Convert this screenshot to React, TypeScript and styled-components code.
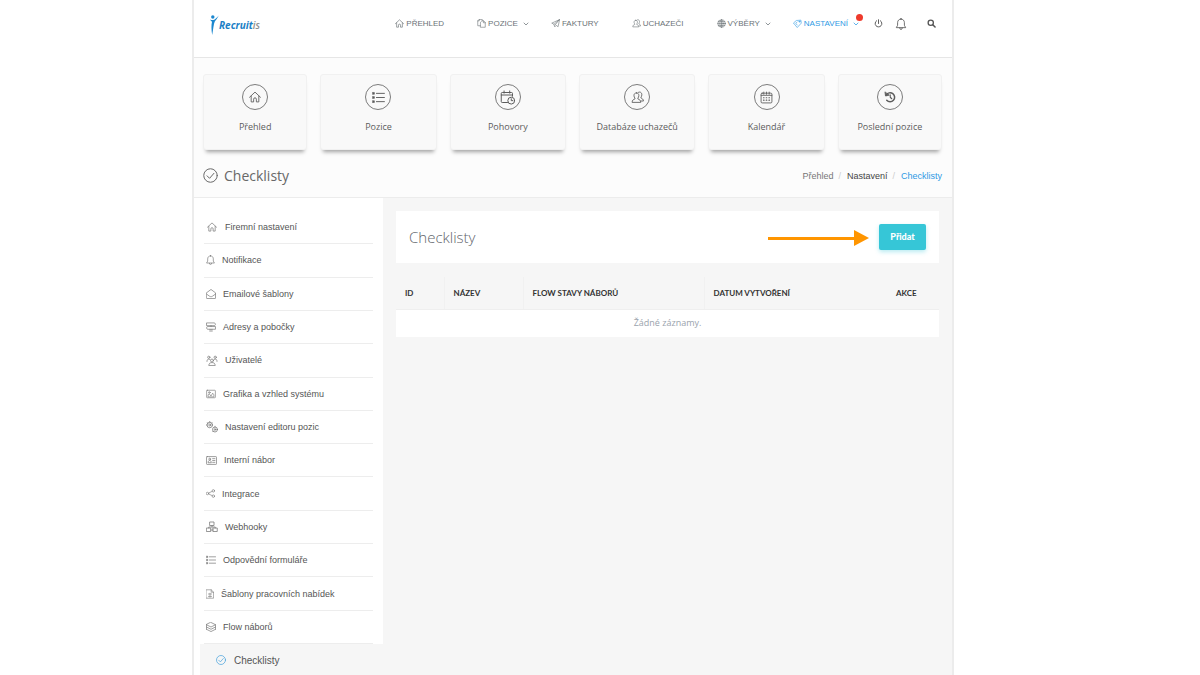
import React from "react";
import styled, { createGlobalStyle, css } from "styled-components";

const sans = `"Liberation Sans", Arial, sans-serif`;
const open = `"Open Sans", "Noto Sans", sans-serif`;
const lato = `Lato, "Open Sans", sans-serif`;

const GlobalStyle = createGlobalStyle`
  *, *::before, *::after { box-sizing: border-box; }
  body { margin: 0; background: #fff; font-family: ${sans}; color: #555; }
  h1, h2, ul, ol { margin: 0; padding: 0; font-weight: 400; }
  li { list-style: none; }
  a { color: inherit; text-decoration: none; }
  button { font: inherit; color: inherit; border: 0; padding: 0; background: none; cursor: pointer; }
`;

/* ---------- icons ---------- */

const Svg = styled.svg<{ $w: number; $h?: number }>`
  display: block;
  flex: none;
  width: ${(p) => p.$w}px;
  height: ${(p) => p.$h ?? p.$w}px;
  fill: none;
  stroke: currentColor;
  stroke-width: 1.6;
  stroke-linecap: round;
  stroke-linejoin: round;
`;

const shapes = {
  home: (
    <>
      <path d="M2 12.5 12 3l10 9.5" />
      <path d="M5 10.5V21h4.5v-5a2.5 2.5 0 0 1 5 0v5H19V10.5" />
    </>
  ),
  copy: (
    <>
      <path d="M9 18H2V5l4-4h8v3" />
      <path d="M10 8l3-3h5l4 4v13H10z" />
      <path d="M17 5v5h5M6 1v4H2" />
    </>
  ),
  plane: (
    <>
      <path d="M22 2 2 11l6 3 2 7 4-4 4 3z" />
      <path d="M22 2 8 14M22 2 11 16" />
    </>
  ),
  people: (
    <>
      <path d="M10 3.500c3 0 4.500 2 4.500 5 0 2-.8 3.500-1.800 4.700v1.500c3 1 5 2 5.300 6.300H2c.3-4.300 2.300-5.300 5.300-6.300v-1.500C6.300 12 5.500 10.500 5.500 8.500c0-3 1.500-5 4.500-5z" />
      <path d="M13 3c.8-.7 1.700-1 2.700-1 3 0 4.300 2.200 4.300 5 0 2-.8 3.500-1.600 4.500v1.500c2.300.9 4.300 2 4.600 5.500h-4" />
    </>
  ),
  globe: (
    <>
      <circle cx="12" cy="12" r="10" />
      <ellipse cx="12" cy="12" rx="4.500" ry="10" />
      <path d="M2 12h20M12 2v20M3.500 7h17M3.500 17h17" />
    </>
  ),
  tag: (
    <>
      <path d="M2 10 9 4l12-1 1 8-10 11z" />
      <path d="m7 11 4 5M11 8l-2 2" />
      <circle cx="17" cy="7" r="1.500" />
    </>
  ),
  chevron: <path d="m4 8 8 8 8-8" strokeWidth="3" />,
  power: (
    <>
      <path d="M12 2v10" strokeWidth="2.500" />
      <path d="M7 4.500a9 9 0 1 0 10 0" strokeWidth="2.500" />
    </>
  ),
  bell: (
    <>
      <path d="M12 2c-4 0-6.500 3-6.500 7v5L3 18.500h18L18.500 14V9c0-4-2.500-7-6.500-7z" />
      <path d="M9.500 19a2.500 3 0 0 0 5 0M12 1v1" />
    </>
  ),
  search: (
    <>
      <circle cx="10" cy="10" r="7" strokeWidth="3.500" />
      <path d="m15.500 15.500 6 6" strokeWidth="4" />
    </>
  ),
  list: (
    <>
      <path d="M8.500 5H22M8.500 12H22M8.500 19H22" />
      <g fill="currentColor" strokeWidth="1">
        <rect x="2" y="3.500" width="3" height="3" />
        <rect x="2" y="10.500" width="3" height="3" />
        <rect x="2" y="17.500" width="3" height="3" />
      </g>
    </>
  ),
  calendarClock: (
    <>
      <path d="M12 20H3.500C2.500 20 2 19.500 2 18.500v-13C2 4.500 2.500 4 3.500 4h15c1 0 1.500.5 1.500 1.500V10M2 8h18M6.500 1.500V5M15.500 1.500V5" />
      <circle cx="18" cy="17" r="5.500" />
      <path d="M18 14v3h2.500" />
    </>
  ),
  calendar: (
    <>
      <rect x="2" y="4" width="20" height="18" rx="2" />
      <path d="M2 8h20M7 2v4M12 2v4M17 2v4" />
      <path d="M6.500 12.500h1M11.500 12.500h1M16.500 12.500h1M6.500 17h1M11.500 17h1M16.500 17h1" strokeWidth="2.200" />
    </>
  ),
  history: (
    <>
      <path d="M4.500 8a9 9 0 1 1 1 10.500" strokeWidth="3" />
      <path d="M2 2.500 3 10l7-1.500z" fill="currentColor" />
      <path d="M12.500 7.500v5l3 3" strokeWidth="2.200" />
    </>
  ),
  check: (
    <>
      <circle cx="12" cy="12" r="10.800" />
      <path d="m6.500 12.500 4 4 7-8" />
    </>
  ),
  mail: (
    <>
      <path d="M2 9.500 12 2l10 7.500V21a1 1 0 0 1-1 1H3a1 1 0 0 1-1-1z" />
      <path d="m2 12 7 5c2 1.300 4 1.300 6 0l7-5" />
    </>
  ),
  sign: (
    <>
      <path d="M3 3h17l2 3-2 3H3zM21 11H4l-2 3 2 3h17z" />
      <path d="M12 9v2M10 17v5M14 17v5" />
    </>
  ),
  users: (
    <>
      <circle cx="12" cy="12" r="3.200" />
      <path d="M5 22c.5-4 3-5.500 7-5.500s6.500 1.500 7 5.500z" />
      <circle cx="5" cy="5" r="2.500" />
      <circle cx="19" cy="5" r="2.500" />
      <path d="M1 14c0-3.500 1.500-5 4-5 1.500 0 2.500.5 3 1.500M23 14c0-3.500-1.500-5-4-5-1.500 0-2.500.5-3 1.500" />
    </>
  ),
  image: (
    <>
      <rect x="1.500" y="3" width="21" height="18" rx="1.500" />
      <circle cx="8" cy="8.500" r="2" />
      <path d="M5 18v-4l3-2 4 5 4-7 3 4v4z" />
    </>
  ),
  gears: (
    <>
      <circle cx="7.500" cy="8" r="5.500" />
      <circle cx="7.500" cy="8" r="2" />
      <circle cx="18" cy="17" r="5" />
      <circle cx="18" cy="17" r="1.700" />
      <path d="M7.500 1v1.500M1 8h1M12 3.500l-1 1M3 3.500l1 1M18 10.500V12M23.500 17H23M13.500 21.500l1-1" />
    </>
  ),
  idcard: (
    <>
      <rect x="1" y="3.500" width="22" height="17" rx="1.500" />
      <circle cx="8" cy="9" r="2" />
      <path d="M4.500 16c.3-3 1.500-4 3.500-4s3.200 1 3.500 4zM14.500 8h5M14.500 12h5M14.500 16h5" />
    </>
  ),
  share: (
    <>
      <circle cx="4.500" cy="12" r="3" />
      <circle cx="19" cy="5.500" r="3" />
      <circle cx="19" cy="18.500" r="3" />
      <path d="m7.500 10.800 8.500-4M7.500 13.200l8.500 4" />
    </>
  ),
  blocks: (
    <>
      <rect x="8" y="2" width="8" height="7" />
      <rect x="1.500" y="14" width="8" height="7" />
      <rect x="14.500" y="14" width="8" height="7" />
      <path d="M12 9v3M5.500 14v-2h13v2M9.500 18h5" />
    </>
  ),
  doc: (
    <>
      <path d="M3 1.500h12l6 6v15H3zM15 1.500v6h6" />
      <path d="M8 12h8M8 18h8M12 10v10" />
    </>
  ),
  layers: (
    <>
      <path d="m12 2 10 5-10 5L2 7z" />
      <path d="m2 12 10 5 10-5M2 17l10 5 10-5M2 7v10M22 7v10" />
    </>
  ),
};

type IconName = keyof typeof shapes;

/* Icons whose drawing does not fill the default square */
const views: Partial<Record<IconName, string>> = {
  home: "1 1 22 22",
  bell: "2 0 20 23",
  doc: "2 0 20 24",
  share: "1 1 22 22",
  list: "1 1 22 22",
  layers: "1 1 22 22",
  mail: "1 1 22 22",
  sign: "1 1 22 22",
};

const Icon = ({ name, w, h }: { name: IconName; w: number; h?: number }) => (
  <Svg viewBox={views[name] ?? "0 0 24 24"} $w={w} $h={h} aria-hidden="true">
    {shapes[name]}
  </Svg>
);

/* ---------- page frame ---------- */

const Page = styled.div`
  display: flex;
  min-height: 100vh;
  padding: 0 246px 0 192px;
`;

const Shell = styled.div`
  flex: 1;
  min-width: 0;
  display: flex;
  flex-direction: column;
  border: solid #ececec;
  border-width: 0 2px;
  background: #fcfcfc;
`;

const Header = styled.header`
  display: flex;
  align-items: center;
  justify-content: space-between;
  height: 58px;
  padding: 0 16px 10px;
  background: #fff;
  border-bottom: 1px solid #e6e6e6;
`;

const Logo = styled.a`
  display: flex;
  align-items: center;
  padding-top: 2px;
  font: italic 700 10px/14px ${open};
  color: #1b7fc6;
`;

const LogoSuffix = styled.span`
  font-weight: 600;
  color: #8f8f8f;
`;

const LogoMark = styled.svg`
  width: 9px;
  height: 20px;
  fill: #1b87cf;
`;

const Nav = styled.nav`
  display: flex;
  align-items: center;
`;

const NavList = styled.ul`
  display: flex;
  align-items: center;
  gap: 22px;
`;

const NavLink = styled.a<{ $active?: boolean; $plain?: boolean }>`
  position: relative;
  display: flex;
  align-items: center;
  gap: 2px;
  padding-right: ${(p) => (p.$plain ? 11 : 0)}px;
  font-size: 8px;
  line-height: 12px;
  color: ${(p) => (p.$active ? "#2f9ae4" : "#6b7377")};
`;

const Caret = styled.span`
  display: flex;
  padding: 1px 0 0 3px;
`;

const Dot = styled.span`
  position: absolute;
  top: -4px;
  right: -4px;
  width: 7px;
  height: 7px;
  border-radius: 50%;
  background: #ee3a2c;
`;

const Tools = styled.div`
  display: flex;
  align-items: center;
  padding-left: 15px;
  color: #555;
`;

const ToolButton = styled.button<{ $gap?: number }>`
  margin-left: ${(p) => p.$gap ?? 0}px;
`;

/* ---------- shortcut tiles ---------- */

const Tiles = styled.div`
  display: grid;
  grid-template-columns: 52fr repeat(4, 58fr) 52fr;
  gap: 13px;
  padding: 16px 10px 0 9px;
`;

const Tile = styled.a`
  display: flex;
  flex-direction: column;
  align-items: center;
  gap: 10px;
  height: 76px;
  padding-top: 9px;
  border: 1px solid #f1f1f1;
  border-radius: 3px;
  background: #f9f9f9;
  box-shadow: 0 5px 4px -3px rgba(0, 0, 0, 0.36);
  font: 9px/14px ${open};
  color: #5c5c5c;
`;

const Ring = styled.span`
  display: grid;
  place-items: center;
  width: 26px;
  height: 26px;
  border: 1px solid #7c7c7c;
  border-radius: 50%;
`;

/* ---------- title bar ---------- */

const TitleBar = styled.div`
  display: flex;
  align-items: center;
  justify-content: space-between;
  height: 48px;
  padding: 4px 10px 0 9px;
  border-bottom: 1px solid #ececec;
`;

const PageTitle = styled.h1`
  display: flex;
  align-items: center;
  gap: 6px;
  font: 14px/20px ${open};
  color: #686868;
`;

const Crumbs = styled.ol`
  display: flex;
  font-size: 9px;
  line-height: 12px;
`;

const Crumb = styled.li<{ $tone: string }>`
  color: ${(p) => p.$tone};
  &:not(:first-child)::before {
    content: "/";
    padding: 0 6px 0 5px;
    color: #ccc;
  }
`;

/* ---------- body ---------- */

const Body = styled.div`
  flex: 1;
  display: flex;
  background: #f6f6f6;
`;

const Sidebar = styled.nav`
  display: flex;
  flex-direction: column;
  width: 189px;
  background: #fff;
`;

const SideList = styled.ul`
  display: grid;
  grid-auto-rows: 1fr;
  height: 446px;
  padding: 13px 10px 0;
`;

const SideItem = styled.li`
  display: flex;
  border-bottom: 1px solid #ededed;
`;

const sideText = css`
  display: flex;
  align-items: center;
  line-height: 14px;
  color: #555;
`;

const SideLink = styled.a`
  ${sideText}
  flex: 1;
  gap: 7px;
  padding-left: 2px;
  font-size: 9px;
  & svg { color: #7c7c7c; }
`;

const ActiveLink = styled.a`
  ${sideText}
  flex: 1;
  align-items: flex-start;
  gap: 8px;
  margin-left: 6px;
  padding: 10px 0 0 16px;
  font-size: 10px;
  background: #f6f6f6;
  & svg { margin-top: 1px; color: #3c9ddb; }
`;

const Main = styled.main`
  flex: 1;
  min-width: 0;
  padding: 13px;
`;

const Panel = styled.section`
  display: flex;
  align-items: center;
  justify-content: space-between;
  height: 52px;
  padding: 0 13px;
  background: #fff;
`;

const PanelTitle = styled.h2`
  font: 300 15px/20px ${open};
  color: #5f656b;
`;

const PanelActions = styled.div`
  display: flex;
  align-items: center;
  gap: 10px;
`;

const Arrow = styled.svg`
  width: 101px;
  height: 18px;
  fill: #ff9500;
`;

const AddButton = styled.button`
  width: 47px;
  height: 26px;
  border-radius: 2px;
  background: #36c6d7;
  box-shadow: 0 2px 4px rgba(54, 198, 215, 0.35);
  font: 900 9px/14px ${lato};
  color: #fff;
`;

const Table = styled.table`
  width: 100%;
  margin-top: 14px;
  border-collapse: collapse;
  table-layout: fixed;
`;

const Th = styled.th<{ $w?: number }>`
  width: ${(p) => (p.$w ? `${p.$w}px` : "auto")};
  height: 32px;
  padding: 0 0 0 9px;
  border-bottom: 1px solid #efefef;
  text-align: left;
  white-space: nowrap;
  font: 700 8px/12px ${lato};
  color: #333;
  &:not(:nth-last-child(-n + 2)) { border-right: 1px solid #f1f1f1; }
`;

const Empty = styled.td`
  height: 28px;
  padding: 0;
  background: #fff;
  text-align: center;
  font: 9px/14px ${open};
  color: #9aa3ad;
`;

/* ---------- data ---------- */

const navItems: { icon: IconName; label: string; caret?: boolean; active?: boolean }[] = [
  { icon: "home", label: "PŘEHLED" },
  { icon: "copy", label: "POZICE", caret: true },
  { icon: "plane", label: "FAKTURY" },
  { icon: "people", label: "UCHAZEČI" },
  { icon: "globe", label: "VÝBĚRY", caret: true },
  { icon: "tag", label: "NASTAVENÍ", caret: true, active: true },
];

const tiles: { icon: IconName; label: string; size: number }[] = [
  { icon: "home", label: "Přehled", size: 12 },
  { icon: "list", label: "Pozice", size: 13 },
  { icon: "calendarClock", label: "Pohovory", size: 15 },
  { icon: "people", label: "Databáze uchazečů", size: 13 },
  { icon: "calendar", label: "Kalendář", size: 13 },
  { icon: "history", label: "Poslední pozice", size: 12 },
];

const sideItems: { icon: IconName; label: string; w: number; h: number }[] = [
  { icon: "home", label: "Firemní nastavení", w: 12, h: 10 },
  { icon: "bell", label: "Notifikace", w: 9, h: 10 },
  { icon: "mail", label: "Emailové šablony", w: 10, h: 10 },
  { icon: "sign", label: "Adresy a pobočky", w: 10, h: 10 },
  { icon: "users", label: "Uživatelé", w: 12, h: 11 },
  { icon: "image", label: "Grafika a vzhled systému", w: 10, h: 10 },
  { icon: "gears", label: "Nastavení editoru pozic", w: 12, h: 12 },
  { icon: "idcard", label: "Interní nábor", w: 11, h: 11 },
  { icon: "share", label: "Integrace", w: 9, h: 9 },
  { icon: "blocks", label: "Webhooky", w: 12, h: 12 },
  { icon: "list", label: "Odpovědní formuláře", w: 10, h: 10 },
  { icon: "doc", label: "Šablony pracovních nabídek", w: 8, h: 10 },
  { icon: "layers", label: "Flow náborů", w: 10, h: 10 },
];

export default function App() {
  return (
    <Page>
      <GlobalStyle />
      <Shell>
        <Header>
          <Logo href="#">
            <LogoMark viewBox="0 0 9 20" aria-hidden="true">
              <circle cx="2.800" cy="2" r="1.700" />
              <path d="M0 4.500C1.500 5.200 3 5.300 4.200 4.800 5.800 4 6.800 2.500 8.800.5 7.500 3 6 5 4.800 6.500 3.600 9 3.300 14 2.200 20 1.300 15 1.200 10 2 6.800 1.200 6.300.5 5.500 0 4.500z" />
            </LogoMark>
            <span>Recruit<LogoSuffix>is</LogoSuffix></span>
          </Logo>
          <Nav aria-label="Hlavní">
            <NavList>
              {navItems.map((n) => (
                <li key={n.label}>
                  <NavLink href="#" $active={n.active} $plain={!n.caret}>
                    <Icon name={n.icon} w={9} />
                    {n.label}
                    {n.caret && <Caret><Icon name="chevron" w={6} /></Caret>}
                    {n.active && <Dot />}
                  </NavLink>
                </li>
              ))}
            </NavList>
            <Tools>
              <ToolButton aria-label="Odhlásit"><Icon name="power" w={9} /></ToolButton>
              <ToolButton aria-label="Oznámení" $gap={12}><Icon name="bell" w={12} /></ToolButton>
              <ToolButton aria-label="Hledat" $gap={20}><Icon name="search" w={9} /></ToolButton>
            </Tools>
          </Nav>
        </Header>

        <Tiles>
          {tiles.map((t) => (
            <Tile href="#" key={t.label}>
              <Ring><Icon name={t.icon} w={t.size} /></Ring>
              {t.label}
            </Tile>
          ))}
        </Tiles>

        <TitleBar>
          <PageTitle><Icon name="check" w={15} />Checklisty</PageTitle>
          <Crumbs>
            <Crumb $tone="#777"><a href="#">Přehled</a></Crumb>
            <Crumb $tone="#444"><a href="#">Nastavení</a></Crumb>
            <Crumb $tone="#2f9ae4"><a href="#">Checklisty</a></Crumb>
          </Crumbs>
        </TitleBar>

        <Body>
          <Sidebar aria-label="Nastavení">
            <SideList>
              {sideItems.map((s) => (
                <SideItem key={s.label}>
                  <SideLink href="#"><Icon name={s.icon} w={s.w} h={s.h} />{s.label}</SideLink>
                </SideItem>
              ))}
            </SideList>
            <ActiveLink href="#" aria-current="page"><Icon name="check" w={10} />Checklisty</ActiveLink>
          </Sidebar>

          <Main>
            <Panel>
              <PanelTitle>Checklisty</PanelTitle>
              <PanelActions>
                <Arrow viewBox="0 0 101 18" aria-hidden="true">
                  <path d="M0 9h86V2l15 8-15 8v-6H0z" />
                </Arrow>
                <AddButton>Přidat</AddButton>
              </PanelActions>
            </Panel>
            <Table>
              <thead>
                <tr>
                  <Th $w={48}>ID</Th>
                  <Th $w={79}>NÁZEV</Th>
                  <Th $w={181}>FLOW STAVY NÁBORŮ</Th>
                  <Th>DATUM VYTVOŘENÍ</Th>
                  <Th $w={52}>AKCE</Th>
                </tr>
              </thead>
              <tbody>
                <tr><Empty colSpan={5}>Žádné záznamy.</Empty></tr>
              </tbody>
            </Table>
          </Main>
        </Body>
      </Shell>
    </Page>
  );
}
